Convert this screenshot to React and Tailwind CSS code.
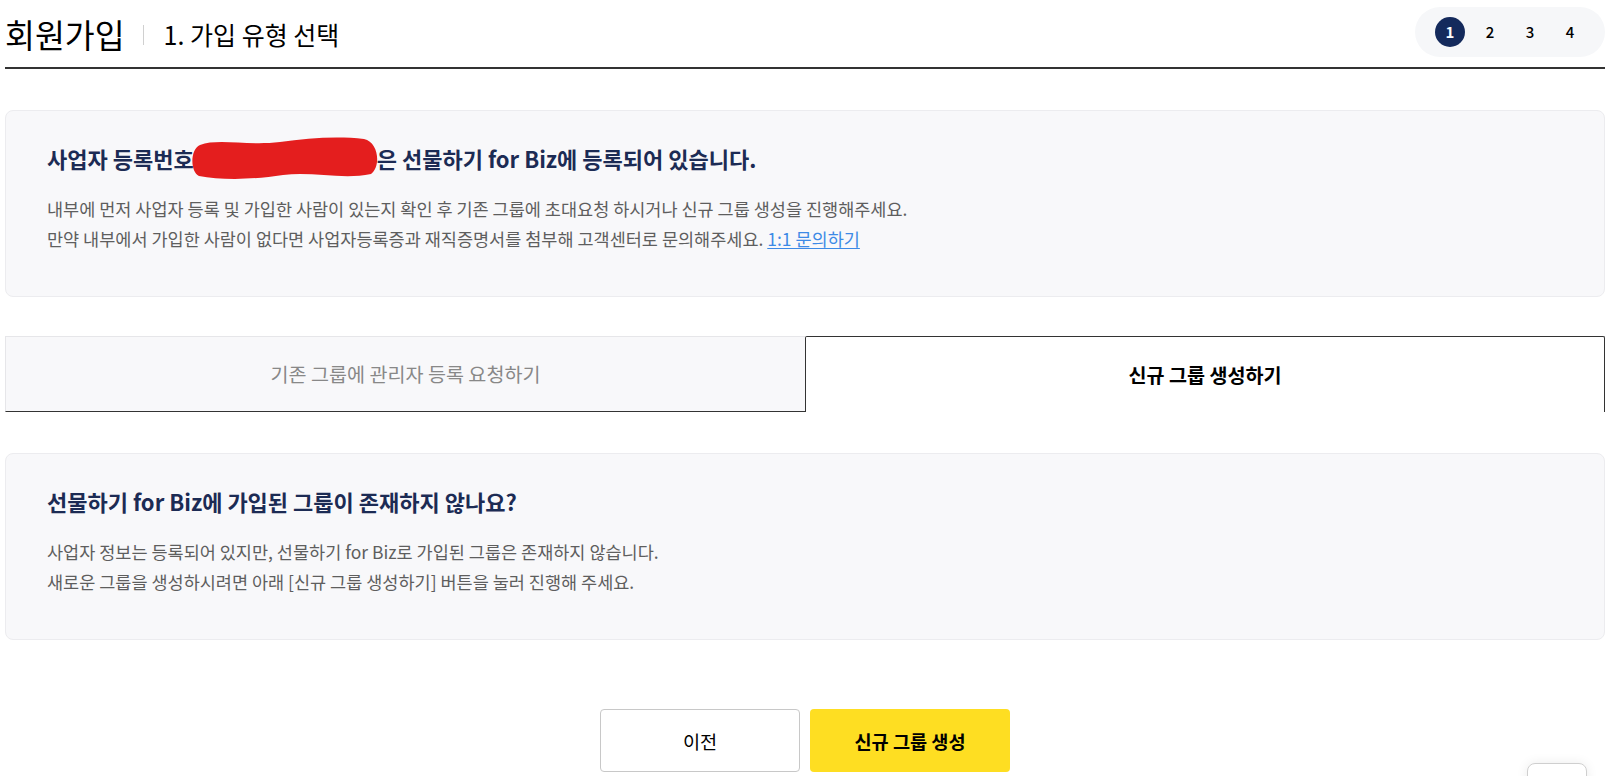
import React from "react";

const Blob = () => (
  <span className="relative inline-block ml-[-5px] w-[188px] h-[32px] align-top">
    <svg
      className="absolute left-0 top-[-6px]"
      width="192"
      height="44"
      viewBox="0 0 190 44"
    >
      <path
        d="M10 9 C28 2, 58 10, 90 6 C118 2, 148 0, 174 3 C189 6, 191 31, 181 38 C152 44, 122 35, 93 39 C62 44, 30 44, 9 40 C0 36, 0 13, 10 9 Z"
        fill="#e41e1e"
      />
    </svg>
  </span>
);

const InfoBox = ({ title, children }) => (
  <div className="rounded-lg border border-[#ececef] bg-[#f8f8fa] pt-[31px] pb-[42px] pl-[41px]">
    <h3 className="text-[22px] leading-[32px] font-bold text-[#1c2b54] whitespace-nowrap">
      {title}
    </h3>
    <div className="mt-5 text-[17.5px] leading-[30px] text-[#5e5e5e]">
      {children}
    </div>
  </div>
);

const App = () => {
  return (
    <div className="h-[776px] overflow-hidden bg-white font-['Noto_Sans_CJK_KR','Noto_Sans',sans-serif] text-black">
      <div className="ml-[5px] w-[1600px]">
        {/* header */}
        <div className="flex items-center justify-between h-[69px] border-b-2 border-[#333]">
          <div className="flex items-center pt-[2px]">
            <h1 className="text-[32.5px] leading-none">회원가입</h1>
            <span className="w-px h-5 bg-[#d0d0d0] ml-[18px] mr-5" />
            <h2 className="text-[25px] leading-none">1. 가입 유형 선택</h2>
          </div>
          <div className="flex items-center gap-[10px] px-5 h-[50px] rounded-full bg-[#f6f7f9] mb-[3px]">
            <span className="w-[30px] h-[30px] rounded-full bg-[#142a5c] text-white text-[15px] font-bold flex items-center justify-center">
              1
            </span>
            <span className="w-[30px] h-[30px] text-[15px] font-medium flex items-center justify-center">
              2
            </span>
            <span className="w-[30px] h-[30px] text-[15px] font-medium flex items-center justify-center">
              3
            </span>
            <span className="w-[30px] h-[30px] text-[15px] font-medium flex items-center justify-center">
              4
            </span>
          </div>
        </div>

        {/* notice */}
        <div className="mt-[41px]">
          <InfoBox
            title={
              <>
                사업자 등록번호
                <Blob />
                은 선물하기 for Biz에 등록되어 있습니다.
              </>
            }
          >
            <p>
              내부에 먼저 사업자 등록 및 가입한 사람이 있는지 확인 후 기존 그룹에 초대요청 하시거나 신규 그룹 생성을 진행해주세요.
            </p>
            <p>
              만약 내부에서 가입한 사람이 없다면 사업자등록증과 재직증명서를 첨부해 고객센터로 문의해주세요.{" "}
              <a href="#" className="text-[#3d8ae6] underline underline-offset-2">
                1:1 문의하기
              </a>
            </p>
          </InfoBox>
        </div>

        {/* tabs */}
        <div className="mt-[39px] flex h-[76px]">
          <button
            type="button"
            className="w-1/2 bg-[#f8f8fa] border-t border-l border-[#e6e6e9] border-b border-b-[#333] text-[19.6px] text-[#888]"
          >
            기존 그룹에 관리자 등록 요청하기
          </button>
          <button
            type="button"
            className="w-1/2 bg-white border border-b-0 border-[#333] rounded-t-[2px] text-[19.6px] font-bold text-black"
          >
            신규 그룹 생성하기
          </button>
        </div>

        {/* description */}
        <div className="mt-[41px]">
          <InfoBox title="선물하기 for Biz에 가입된 그룹이 존재하지 않나요?">
            <p>사업자 정보는 등록되어 있지만, 선물하기 for Biz로 가입된 그룹은 존재하지 않습니다.</p>
            <p>새로운 그룹을 생성하시려면 아래 [신규 그룹 생성하기] 버튼을 눌러 진행해 주세요.</p>
          </InfoBox>
        </div>

        {/* buttons */}
        <div className="mt-[69px] flex justify-center gap-[10px]">
          <button
            type="button"
            className="w-[200px] h-[63px] rounded-[4px] border border-[#c8c8c8] bg-white text-[18.6px]"
          >
            이전
          </button>
          <button
            type="button"
            className="w-[200px] h-[63px] rounded-[4px] bg-[#fede22] text-[18.6px] font-bold"
          >
            신규 그룹 생성
          </button>
        </div>
      </div>

      {/* floating top button */}
      <div className="fixed left-[1527px] top-[763px] w-[60px] h-[60px] rounded-lg border border-[#cfcfcf] bg-white shadow-[0_0_12px_rgba(0,0,0,0.08)]" />
    </div>
  );
};

export default App;
